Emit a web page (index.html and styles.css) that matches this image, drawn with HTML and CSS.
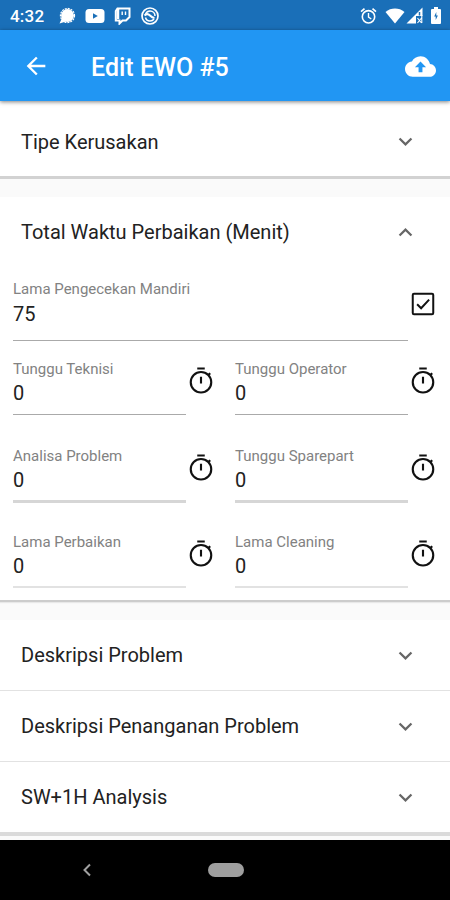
FILE: index.html
```
<!DOCTYPE html>
<html lang="id">
<head>
  <meta charset="UTF-8">
  <meta name="viewport" content="width=device-width, initial-scale=1.0">
  <title>Edit EWO #5</title>
  <link rel="stylesheet" href="styles.css">
</head>
<body>
<!-- shared icons -->
<svg class="defs" width="0" height="0">
  <symbol id="timer" viewBox="0 0 24 24">
    <g fill="none" stroke="#111" stroke-width="1.700">
      <circle cx="12" cy="13" r="8.200"/>
      <path d="M9 2h6M12 8.500V14M17.500 7.500l1.900-1.700"/>
    </g>
  </symbol>
  <symbol id="more" viewBox="0 0 24 24">
    <path d="M16.590 8.590L12 13.170 7.410 8.590 6 10l6 6 6-6z"/>
  </symbol>
  <symbol id="less" viewBox="0 0 24 24">
    <path d="M12 8l-6 6 1.410 1.410L12 10.830l4.590 4.580L18 14z"/>
  </symbol>
</svg>

<div class="status-bar">
  <span class="clock">4:32</span>
  <svg class="ic-chat" width="18" height="18" viewBox="0 0 18 18">
    <circle cx="9.500" cy="8.500" r="6.400" fill="#fff"/>
    <circle cx="9.500" cy="8.500" r="7" fill="none" stroke="#fff" stroke-width="1.300" stroke-dasharray="2 1"/>
    <path d="M4 11l-2.500 5.500L8 14.500z" fill="#fff"/>
  </svg>
  <svg class="ic-tube" width="20" height="16" viewBox="0 0 20 16">
    <rect x="0.500" y="1" width="19" height="14" rx="3.500" fill="#fff"/>
    <path d="M8 5.300l4.800 2.700L8 10.700z" fill="#1a6fb8"/>
  </svg>
  <svg class="ic-twitch" width="17" height="18" viewBox="0 0 17 18">
    <path d="M3.500 1.500h12v8.500l-3.500 3.500H8.500L5.500 16.500v-3H1.800V4z" fill="none" stroke="#fff" stroke-width="2"/>
    <path d="M4 2v10" stroke="#fff" stroke-width="2.500"/>
    <path d="M8.200 4.500v3.500M11.500 4.500v3.500" stroke="#fff" stroke-width="1.400"/>
  </svg>
  <svg class="ic-round" width="18" height="18" viewBox="0 0 18 18" fill="none" stroke="#fff">
    <circle cx="9" cy="9" r="8" stroke-width="1.700"/>
    <path d="M4.500 7c1-2 2.700-3 4.500-3 3 0 5 2.300 5 5M4.500 10.500C5 12.700 7 14 9 14c1.700 0 3.200-.800 4-2" stroke-width="1.500"/>
    <path d="M3.500 8.500c2.500-2.500 4-1.500 5.500 0s2.500 2.300 4.500 2.500" stroke-width="2"/>
  </svg>
  <div class="status-right">
    <svg width="17" height="18" viewBox="0 0 17 18" fill="none" stroke="#fff">
      <circle cx="8.500" cy="9.800" r="6.200" stroke-width="1.600"/>
      <path d="M8.500 6v4.200l2.800 1.800" stroke-width="1.400"/>
      <path d="M1 4.600l3.500-3M16 4.600l-3.500-3" stroke-width="1.700"/>
    </svg>
    <svg class="ic-wifi" width="20" height="16" viewBox="0 0 20 16">
      <path d="M.500 4C6-.600 14-.600 19.500 4L10 15.500z" fill="#fff"/>
    </svg>
    <svg class="ic-signal" width="17" height="17" viewBox="0 0 17 17">
      <path d="M.500 16.500L16.500.500V9H10v7.500z" fill="#fff"/>
      <path d="M13.500 5v3.500" stroke="#1a6fb8" stroke-width="1.500"/>
      <path d="M11.500 11l4 5M15.500 11l-4 5M15.800 8v8" stroke="#fff" stroke-width="1.100"/>
    </svg>
    <svg class="ic-battery" width="12" height="17" viewBox="0 0 12 17">
      <path d="M4 0h4v2h2q1 0 1 1v13q0 1-1 1H2q-1 0-1-1V3q0-1 1-1h2z" fill="#fff"/>
      <path d="M6.300 5L4.200 9.500h1.500v3.500L7.900 8.500H6.300z" fill="#1a6fb8"/>
    </svg>
  </div>
</div>

<div class="app-bar">
  <svg class="back" width="28" height="28" viewBox="0 0 24 24">
    <path d="M20 11H7.830l5.590-5.590L12 4l-8 8 8 8 1.410-1.410L7.830 13H20v-2z" fill="#fff"/>
  </svg>
  <h1 class="title">Edit EWO #5</h1>
  <svg class="upload" width="31" height="31" viewBox="0 0 24 24">
    <path d="M19.350 10.040C18.670 6.590 15.640 4 12 4 9.110 4 6.600 5.640 5.350 8.040 2.340 8.360 0 10.910 0 14c0 3.310 2.690 6 6 6h13c2.760 0 5-2.240 5-5 0-2.640-2.050-4.780-4.650-4.960zM13.500 12.500v4h-3v-4H7.700l4.300-4.300 4.300 4.300z" fill="#fff"/>
  </svg>
</div>

<div class="content">
  <div class="panel first">
    <div class="panel-header">
      <span>Tipe Kerusakan</span>
      <svg class="arrow"><use href="#more"/></svg>
    </div>
  </div>

  <div class="panel open">
    <div class="panel-header">
      <span>Total Waktu Perbaikan (Menit)</span>
      <svg class="arrow"><use href="#less"/></svg>
    </div>
    <div class="panel-body">
      <div class="field-box full">
        <div class="field">
          <label>Lama Pengecekan Mandiri</label>
          <div class="value">75</div>
        </div>
        <svg class="icon" viewBox="0 0 24 24">
          <g fill="none" stroke="#111" stroke-width="1.600">
            <rect x="3.800" y="3.800" width="16.400" height="16.400" rx="1"/>
            <path d="M7.300 12.200l3.200 3.200 6.400-6.900"/>
          </g>
        </svg>
      </div>
      <div class="row">
        <div class="field-box">
          <div class="field">
            <label>Tunggu Teknisi</label>
            <div class="value">0</div>
          </div>
          <svg class="icon"><use href="#timer"/></svg>
        </div>
        <div class="field-box">
          <div class="field">
            <label>Tunggu Operator</label>
            <div class="value">0</div>
          </div>
          <svg class="icon"><use href="#timer"/></svg>
        </div>
      </div>
      <div class="row thick">
        <div class="field-box">
          <div class="field">
            <label>Analisa Problem</label>
            <div class="value">0</div>
          </div>
          <svg class="icon"><use href="#timer"/></svg>
        </div>
        <div class="field-box">
          <div class="field">
            <label>Tunggu Sparepart</label>
            <div class="value">0</div>
          </div>
          <svg class="icon"><use href="#timer"/></svg>
        </div>
      </div>
      <div class="row light">
        <div class="field-box">
          <div class="field">
            <label>Lama Perbaikan</label>
            <div class="value">0</div>
          </div>
          <svg class="icon"><use href="#timer"/></svg>
        </div>
        <div class="field-box">
          <div class="field">
            <label>Lama Cleaning</label>
            <div class="value">0</div>
          </div>
          <svg class="icon"><use href="#timer"/></svg>
        </div>
      </div>
    </div>
  </div>

  <div class="panel last">
    <div class="panel-header">
      <span>Deskripsi Problem</span>
      <svg class="arrow"><use href="#more"/></svg>
    </div>
    <div class="panel-header">
      <span>Deskripsi Penanganan Problem</span>
      <svg class="arrow"><use href="#more"/></svg>
    </div>
    <div class="panel-header">
      <span>SW+1H Analysis</span>
      <svg class="arrow"><use href="#more"/></svg>
    </div>
  </div>
</div>

<div class="nav-bar">
  <svg class="nav-back" width="10" height="14" viewBox="0 0 10 14">
    <path d="M8 1.500L2.500 7 8 12.500" fill="none" stroke="#a0a0a0" stroke-width="2"/>
  </svg>
  <div class="pill"></div>
</div>
</body>
</html>
```
FILE: styles.css
```
* {
  box-sizing: border-box;
}

body {
  margin: 0;
  width: 450px;
  height: 900px;
  overflow: hidden;
  display: flex;
  flex-direction: column;
  background: #fafafa;
  font-family: Roboto, "Liberation Sans", sans-serif;
  color: #222;
}

svg {
  display: block;
  flex: none;
}

.defs {
  display: none;
}

/* status bar */
.status-bar {
  display: flex;
  align-items: center;
  height: 30px;
  padding: 1px 8px 0 10px;
  background: #1a6fb8;
}

.clock {
  width: 48px;
  color: #fff;
  font-size: 17px;
  font-weight: 500;
  letter-spacing: 0.2px;
}

.ic-tube {
  margin-left: 9px;
}

.ic-twitch {
  margin-left: 9px;
}

.ic-round {
  margin-left: 10px;
}

.status-right {
  display: flex;
  align-items: center;
  margin-left: auto;
}

.ic-wifi {
  margin-left: 8px;
}

.ic-signal {
  margin-left: 1px;
}

.ic-battery {
  margin-left: 7px;
}

/* app bar */
.app-bar {
  position: relative;
  display: flex;
  align-items: center;
  height: 71px;
  padding: 1px 14px 0 22px;
  background: #2196f3;
  box-shadow: 0 1px 4px rgba(0, 0, 0, 0.5);
}

.title {
  flex: 1;
  margin: 2px 0 0 41px;
  color: #fff;
  font-size: 25px;
  font-weight: 500;
}

/* panels */
.content {
  flex: 1;
}

.panel {
  background: #fff;
  border-bottom: 2px solid #d2d2d2;
}

.first {
  height: 78px;
  padding-top: 5px;
  border-bottom-width: 3px;
}

.open {
  height: 405px;
  margin-top: 18px;
  border-bottom-color: #ccc;
  box-shadow: 0 1px 1px #e8e8e8;
}

.last {
  margin-top: 18px;
  border-bottom: 4px solid #dadada;
}

.panel-header {
  display: flex;
  align-items: center;
  justify-content: space-between;
  height: 71px;
  padding: 0 31px 0 21px;
  font-size: 20px;
}

.last .panel-header {
  height: 70px;
}

.last .panel-header + .panel-header {
  height: 71px;
  border-top: 1px solid #e2e2e2;
}

.open .panel-header {
  height: 70px;
}

.arrow {
  width: 27px;
  height: 27px;
  fill: #666;
}

/* fields */
.panel-body {
  padding: 11px 12px 0 13px;
}

.row {
  display: flex;
  gap: 19px;
  height: 86.5px;
}

.field-box {
  display: flex;
  flex: 1;
}

.full {
  height: 80px;
}

.field {
  flex: 1;
  height: 57px;
  border-bottom: 1px solid #aaa;
}

.full .field {
  height: 63px;
}

.thick .field {
  border-bottom: 3px solid #d6d6d6;
  height: 58px;
}

.light .field {
  border-bottom: 2px solid #e2e2e2;
}

label {
  display: block;
  height: 22px;
  color: #828282;
  font-size: 15px;
  line-height: 22px;
}

.value {
  font-size: 20px;
  line-height: 27px;
}

.full .value {
  padding-top: 1px;
}

.icon {
  width: 30px;
  height: 30px;
  margin-top: 8px;
  fill: #111;
}

.full .icon {
  margin-top: 11px;
}

/* navigation bar */
.nav-bar {
  display: flex;
  align-items: center;
  height: 60px;
  padding-left: 82px;
  background: #000;
}

.pill {
  width: 36px;
  height: 14px;
  margin-left: 116px;
  border-radius: 7px;
  background: #9e9e9e;
}
```
